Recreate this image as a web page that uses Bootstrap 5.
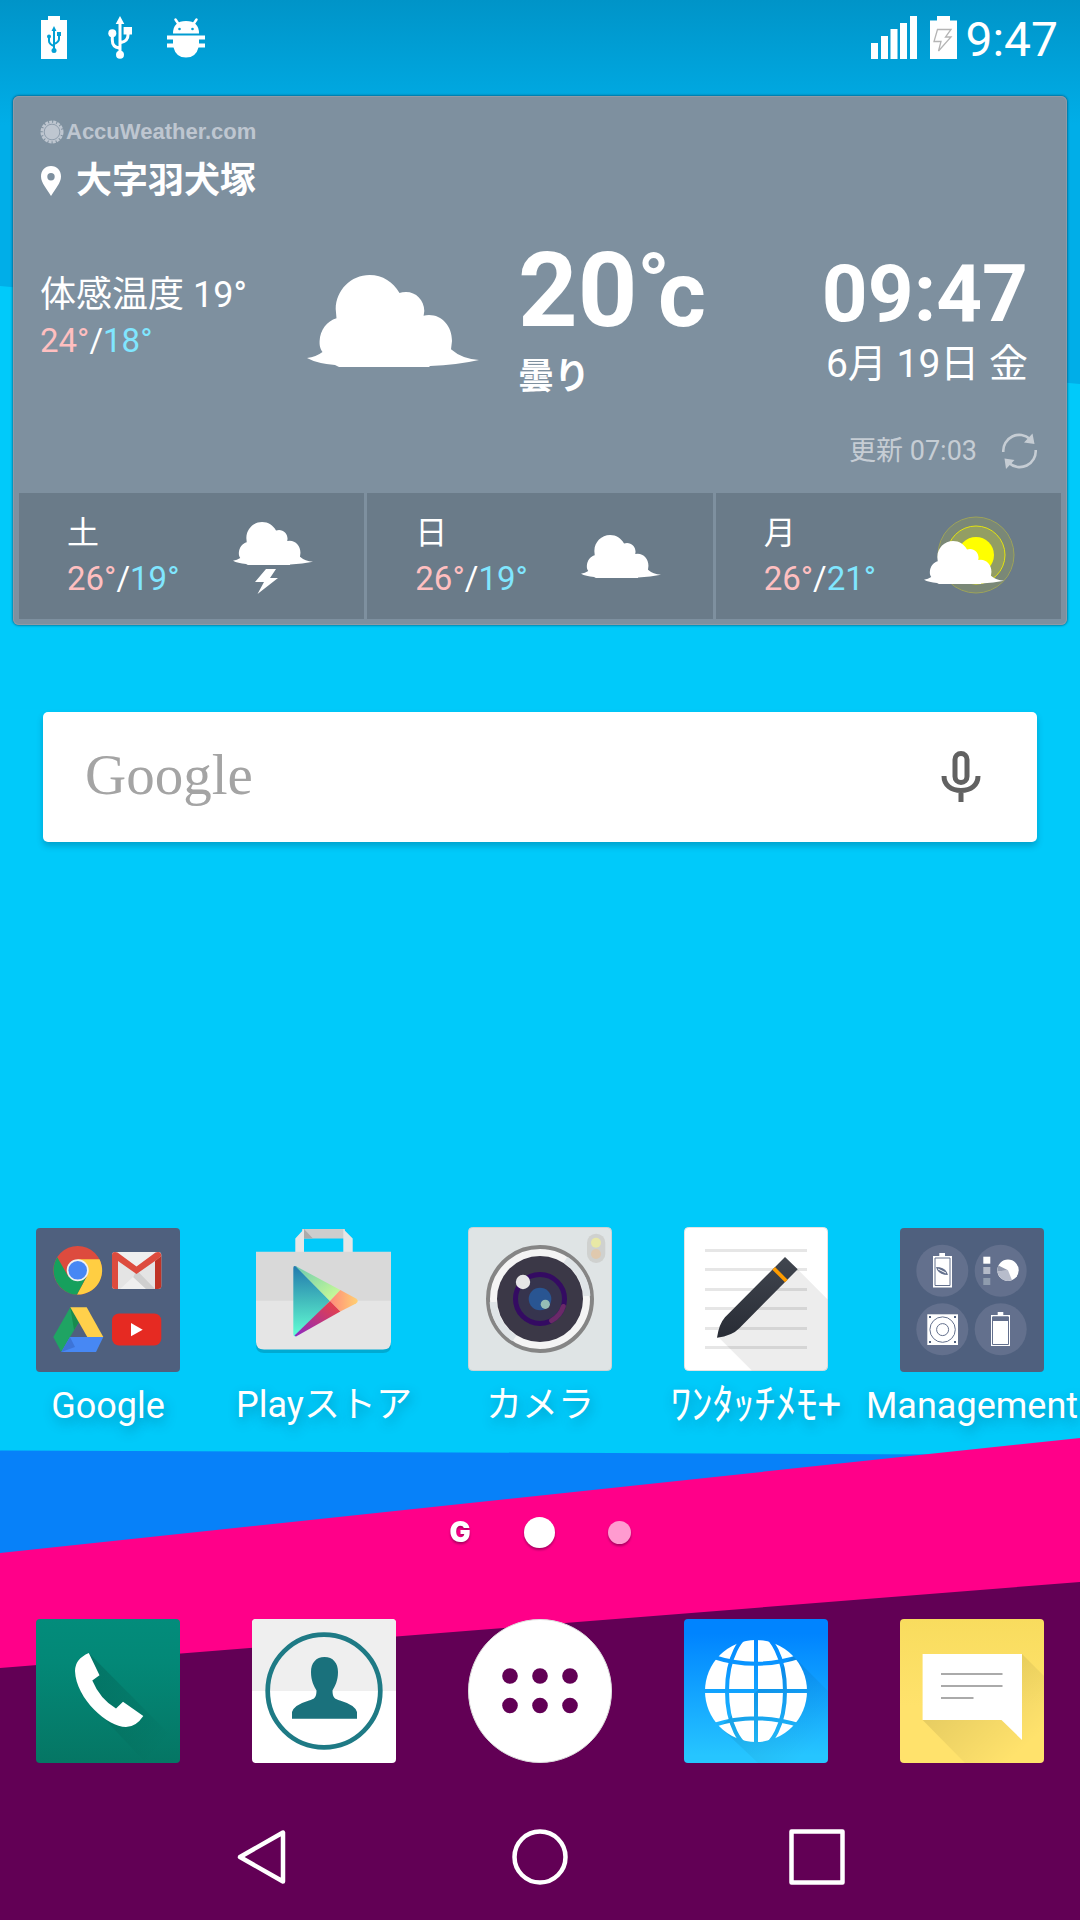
<!DOCTYPE html>
<html lang="ja">
<head>
<meta charset="utf-8">
<meta name="viewport" content="width=device-width, initial-scale=1">
<title>Home</title>
<link href="https://cdn.jsdelivr.net/npm/bootstrap@5.3.0/dist/css/bootstrap.min.css" rel="stylesheet">
<style>
  body { font-family: Roboto, "Noto Sans CJK JP", sans-serif; background: #00cafa; color: #fff; }
  svg { display: block; flex-shrink: 0; }
  .wallpaper { z-index: -1; }
  .bare { background: none; border: 0; padding: 0; color: inherit; }

  .status { height: 75px; padding: 0 22px 0 41px; }
  .status-icons { gap: 34px; }
  .clock { padding-top: 4px; font-size: 48px; line-height: 56px; }

  .weather { margin: 21px 13px 0; padding: 0 6px 6px; background: #7e909f; border-radius: 6px;
    box-shadow: inset 0 0 0 1px #8f9aa5, 0 0 2px 1px rgba(0,50,80,.45); }
  .now { padding: 24px 23px 24px 21px; }
  .brand { font: bold 22px/24px "Liberation Sans", Arial, sans-serif; color: #bec6d0; gap: 2px; }
  .place { margin-top: 17px; font-size: 36px; line-height: 40px; gap: 14px; }
  .current { margin-top: 35px; }
  .feels { width: 267px; font-size: 36px; line-height: 46px; }
  .range { font-size: 33px; line-height: 46px; }
  .hi { color: #ffbfc0; }
  .lo { color: #80e6ff; }
  .sky { margin-top: 6px; }
  .reading { margin-left: 39px; }
  .temp { font-size: 104px; line-height: 110px; }
  .deg { font-size: 84px; line-height: 80px; vertical-align: 14px; margin-right: -12px; }
  .unit { font-size: 92px; }
  .cond { padding-top: 4px; font-size: 36px; line-height: 46px; }
  .when { margin-right: 10px; padding-top: 12px; }
  .time-now { font-size: 80px; line-height: 80px; }
  .date-now { font-size: 39px; line-height: 60px; }
  .updated { margin-top: 33px; font-size: 27px; line-height: 36px; gap: 24px; color: #c6cdd4; }
  .days { gap: 3px; }
  .day { flex: 1 1 0; height: 126px; padding: 0 41px 0 48px; background: #6a7b89; }
  .day-name { font-size: 32px; line-height: 46px; }

  .search { margin: 87px 43px 0; height: 130px; padding: 0 48px 0 42px; background: #fff; border-radius: 5px;
    box-shadow: 0 4px 6px rgba(0,70,100,.3); }
  .search .form-control { font: 57px/70px "Liberation Serif", "Times New Roman", serif; color: #616161;
    background: none; border: 0; padding: 0 0 4px; box-shadow: none; }
  .search .form-control::placeholder { color: #a4a4a4; opacity: 1; }

  .tile { flex: 1 1 0; min-width: 0; color: #fff; text-decoration: none; }
  .folder { padding-top: 1px; }
  .tile-label { margin-top: 10px; font-size: 36px; line-height: 48px; white-space: nowrap;
    text-shadow: 2px 5px 12px rgba(0,60,90,.35); }
  .tile-label-narrow { font-size: 42px; }

  .pager { height: 40px; margin: 82px 0 67px; gap: 53px; filter: drop-shadow(0 2px 1px rgba(90,0,60,.5)); }
  .pager-home { font: 900 28px/30px Inter, Roboto, sans-serif; }
  .dot-now { width: 31px; height: 31px; background: #fff; }
  .dot-next { width: 23px; height: 23px; background: #ff9bd0; }
  .softkeys { width: 77%; height: 126px; margin: 31px auto 0; }
</style>
</head>
<body>
<svg width="0" height="0" class="position-absolute" aria-hidden="true">
  <defs>
    <symbol id="cloud" viewBox="0 0 172 92"><path fill="#fff" d="M0 83Q9 82 15.500 77C12.500 73 12.500 69 12.600 66C13 55 20 46 29.500 43.300L28.700 34C29 15 44 0 62.500 0C76 0 86 7 92.500 18Q95 17 99 17C109 17 117.300 25 117.300 36L116.600 40.700Q119 40 122 40C135 40 145 51 145 66L144 74.300Q155 84 172 85Q150 90 123 91L122 92H32L28 90Q10 88.500 0 83Z"/></symbol>
    <linearGradient id="gTop" x2="0" y2="1"><stop offset="0" stop-color="#0094c8"/><stop offset="1" stop-color="#00aee8"/></linearGradient>
    <linearGradient id="gPhone" x2="0" y2="1"><stop offset="0" stop-color="#038c7b"/><stop offset=".3" stop-color="#038877"/><stop offset="1" stop-color="#057664"/></linearGradient>
    <linearGradient id="gWeb" x2="0" y2="1"><stop offset=".1" stop-color="#0084ff"/><stop offset=".95" stop-color="#26c5ff"/></linearGradient>
    <linearGradient id="gMsg" x2="0" y2="1"><stop offset="0" stop-color="#f8dc5e"/><stop offset=".6" stop-color="#ffe26c"/></linearGradient>
    <linearGradient id="gShade" x2="1" y2="1"><stop offset="0" stop-opacity=".15"/><stop offset=".85" stop-opacity="0"/></linearGradient>
    <linearGradient id="gPlayA" x2="0" y2="1"><stop offset="0" stop-color="#2279ae"/><stop offset=".5" stop-color="#43bdbd"/><stop offset="1" stop-color="#62ffd5"/></linearGradient>
    <linearGradient id="gPlayB" x2="1" y2="1"><stop offset="0" stop-color="#6acab0"/><stop offset="1" stop-color="#d4ff94"/></linearGradient>
    <linearGradient id="gPlayC" x2="1"><stop offset="0" stop-color="#ff8a7a"/><stop offset="1" stop-color="#ffd072"/></linearGradient>
    <linearGradient id="gPlayD" y1="1" x2="1" y2="0"><stop offset="0" stop-color="#8a28c4"/><stop offset="1" stop-color="#f0443c"/></linearGradient>
    <linearGradient id="gPen" x2="0" y2="1"><stop offset="0" stop-color="#41464f"/><stop offset="1" stop-color="#282c35"/></linearGradient>
  </defs>
</svg>

<svg class="wallpaper position-absolute top-0 start-0 w-100 h-100" viewBox="0 0 1080 1920" preserveAspectRatio="none" aria-hidden="true">
  <rect width="1080" height="1920" fill="#00cafa"/>
  <path fill="#00aee8" d="M0 0H1080V384L0 286Z"/>
  <rect width="1080" height="125" fill="url(#gTop)"/>
  <path fill="#0781f9" d="M0 1450.500L1080 1455V1700H0Z"/>
  <path fill="#ff0089" d="M0 1553L1080 1438V1700H0Z"/>
  <path fill="#620055" d="M0 1668L1080 1582V1920H0Z"/>
</svg>

<div class="d-flex flex-column min-vh-100">
  <header class="status d-flex align-items-center justify-content-between">
    <div class="status-icons d-flex align-items-center">
      <svg width="26" height="43" viewBox="0 0 26 43" aria-label="Battery"><path fill="#fff" d="M7 0H19V4H26V43H0V4H7Z"/><g fill="none" stroke="#04a0d5" stroke-width="2"><path d="M13 14V34M8 21V25Q8 28 13 30M18 20V23Q18 26 13 28"/></g><g fill="#04a0d5"><path d="M13 10L15.500 15H10.500ZM16 16h4v4h-4z"/><circle cx="8" cy="20.500" r="2"/><circle cx="13" cy="34.500" r="2.500"/></g></svg>
      <svg width="32" height="43" viewBox="0 0 32 43" aria-label="USB"><g fill="none" stroke="#fff" stroke-width="3"><path d="M19 6V38M11.300 17V24Q11.300 31 18 32M27 16V19Q27 25 20 26.500"/></g><g fill="#fff"><path d="M19 0L23.300 8H14.700ZM22.600 11H31V18.500H22.600Z"/><circle cx="11.300" cy="17.300" r="4"/><circle cx="19" cy="38.700" r="4"/></g></svg>
      <svg width="38" height="43" viewBox="0 0 38 43" aria-label="USB debugging"><g fill="#fff"><path d="M6 17.500Q6 5 19 5T32 17.500ZM0 19.500H38V23.500H32V27.500H38V31.500H31.500Q29 41.500 19 41.500T6.500 31.500H0V27.500H6V23.500H0Z"/></g><path stroke="#fff" stroke-width="2.500" stroke-linecap="round" d="M8.500 3.500L11.500 8M29.500 3.500L26.500 8"/><g fill="#03a0d5"><circle cx="12.500" cy="13" r="1.300"/><circle cx="25.500" cy="13" r="1.300"/></g></svg>
    </div>
    <div class="d-flex align-items-center">
      <svg width="46" height="43" viewBox="0 0 46 43" aria-label="Signal"><path fill="#fff" d="M0 27h7v16H0zM10 20h7v23h-7zM19.500 13h7v30h-7zM29 7h7v36h-7zM39 0h7v43h-7z"/></svg>
      <svg class="ms-2 me-1" width="36" height="43" viewBox="0 0 36 43" aria-label="Charging"><path fill="#fff" d="M12 0H25V4.500H32V43H5V4.500H12Z"/><path fill="none" stroke="#b5b5b5" stroke-width="1.300" d="M12.500 13.500H26L20.500 21H26L13.500 35L16 25.500H9Z"/></svg>
      <div class="clock">9:47</div>
    </div>
  </header>

  <main class="d-flex flex-column flex-grow-1">
    <section class="weather">
      <div class="now">
        <div class="brand d-flex align-items-center">
          <svg width="24" height="24" viewBox="0 0 24 24" aria-hidden="true"><circle cx="12" cy="12" r="10" fill="none" stroke="#bec6d0" stroke-width="3" stroke-dasharray="3 1"/><circle cx="12" cy="12" r="9.300" fill="#bec6d0"/><circle cx="12" cy="12" r="7.800" fill="none" stroke="#8f9dac" stroke-width="1"/></svg>
          <span>AccuWeather.com</span>
        </div>
        <div class="place d-flex align-items-center fw-bold">
          <svg width="22" height="30" viewBox="0 0 22 30" aria-hidden="true"><path fill="#fff" fill-rule="evenodd" d="M11 0C17 0 21 4.500 21 10.500C21 17 15 23 11 30C7 23 1 17 1 10.500C1 4.500 5 0 11 0ZM11 7a3.700 3.700 0 1 0 0 7.400a3.700 3.700 0 1 0 0-7.400Z"/></svg>
          <span>大字羽犬塚</span>
        </div>
        <div class="current d-flex align-items-center">
          <div class="feels">
            <div>体感温度 19°</div>
            <div class="range"><span class="hi">24°</span>/<span class="lo">18°</span></div>
          </div>
          <svg class="sky" width="172" height="92" aria-label="曇り"><use href="#cloud"/></svg>
          <div class="reading fw-bold">
            <div class="temp">20<span class="deg">°</span><span class="unit">c</span></div>
            <div class="cond">曇り</div>
          </div>
          <div class="when ms-auto text-end">
            <div class="time-now fw-bold">09:47</div>
            <div class="date-now">6月 19日 金</div>
          </div>
        </div>
        <div class="updated d-flex align-items-center justify-content-end">
          <span>更新 07:03</span>
          <button class="bare" type="button" aria-label="更新">
            <svg width="37" height="36" viewBox="0 0 37 36"><g fill="none" stroke="#c6cdd4" stroke-width="2.600"><path d="M2.300 19A16 16 0 0 1 29 6M34.700 17A16 16 0 0 1 8 30"/></g><path fill="#c6cdd4" d="M31.500 0.500L33.500 11L23 9.500ZM3.500 25.500L13.500 27L5 36Z"/></svg>
          </button>
        </div>
      </div>
      <div class="days d-flex">
        <div class="day d-flex align-items-center justify-content-between">
          <div><div class="day-name">土</div><div class="range"><span class="hi">26°</span>/<span class="lo">19°</span></div></div>
          <svg width="100" height="84" viewBox="0 0 100 84" aria-hidden="true"><use href="#cloud" x="10" y="8" width="80" height="43"/><path fill="#fff" d="M43 55H53L47 64H55L34.500 80L41 68H32Z"/></svg>
        </div>
        <div class="day d-flex align-items-center justify-content-between">
          <div><div class="day-name">日</div><div class="range"><span class="hi">26°</span>/<span class="lo">19°</span></div></div>
          <svg width="100" height="84" viewBox="0 0 100 84" aria-hidden="true"><use href="#cloud" x="9" y="21" width="80" height="43"/></svg>
        </div>
        <div class="day d-flex align-items-center justify-content-between">
          <div><div class="day-name">月</div><div class="range"><span class="hi">26°</span>/<span class="lo">21°</span></div></div>
          <svg width="100" height="84" viewBox="0 0 100 84" aria-hidden="true"><circle cx="56" cy="41" r="38" fill="#7a8877" stroke="#9da35a"/><circle cx="56" cy="41" r="29" fill="#939e63" stroke="#e4e40e"/><circle cx="56" cy="41" r="18" fill="#ff0"/><use href="#cloud" x="4" y="27" width="80" height="43"/></svg>
        </div>
      </div>
    </section>

    <form class="search d-flex align-items-center" role="search">
      <input class="form-control" type="search" placeholder="Google" aria-label="Google">
      <button class="bare" type="button" aria-label="音声検索">
        <svg width="56" height="54" viewBox="0 0 56 54"><rect x="22" y="3.500" width="12" height="29" rx="6" fill="none" stroke="#616161" stroke-width="5"/><path fill="none" stroke="#616161" stroke-width="5" d="M11 26C11 35 18 40.500 28 40.500S45 35 45 26M28 40V52"/></svg>
      </button>
    </form>

    <nav class="d-flex mt-auto" aria-label="アプリ">
      <a class="tile folder d-flex flex-column align-items-center" href="#google">
        <svg width="144" height="144" viewBox="0 0 144 144" aria-hidden="true">
          <rect width="144" height="144" rx="4" fill="#4f607e"/>
          <circle cx="41.700" cy="42.300" r="24.300" fill="#dd4b3e"/>
          <path fill="#ffce42" d="M41.700 31.300H63.500A24.300 24.300 0 0 1 41 66.600L51.200 47.800Z"/>
          <path fill="#16a05d" d="M41 66.600A24.300 24.300 0 0 1 21.300 29.300L32 48L41.700 53.300L50.500 48.700Z"/>
          <circle cx="41.700" cy="42.300" r="11" fill="#f1f1f1"/><circle cx="41.700" cy="42.300" r="9.300" fill="#4687f4"/>
          <rect x="76" y="24" width="49.300" height="37" rx="3" fill="#e4e4e4"/>
          <path fill="#cfcfcf" d="M100.500 42L119 61H92Z"/><path fill="#efefef" d="M97 49L110 61H84ZM80 24H121L100.500 39Z"/>
          <path fill="#dd4b3e" d="M76 27Q76 24 79 24L81.500 24.500L100.500 38.500L119.500 24.500L122 24Q125.300 24 125.300 28L119 33L100.500 46L82 33V61H79Q76 61 76 58Z"/><path fill="#bf3326" d="M119 33L125.300 28V58Q125.300 61 122 61H119Z"/>
          <path fill="#1fa463" d="M34.300 79.300L42.700 94.300L25.300 124L17.300 109Z"/><path fill="#188b4d" d="M34.300 79.300L42.700 94.300L38 102Z"/><path fill="#ffd04b" d="M34.300 79.300H50.700L67.300 109H51.300Z"/><path fill="#4788f4" d="M34 109H67.300L60 124H25.300Z"/><path fill="#3d74d8" d="M34 109L25.300 124L39 119Z"/>
          <rect x="76" y="85.500" width="49.300" height="32" rx="7" fill="#e62a22"/><path fill="#fff" d="M95 95L106.700 101.800L95 108.300Z"/>
        </svg>
        <span class="tile-label">Google</span>
      </a>
      <a class="tile d-flex flex-column align-items-center" href="#play">
        <svg width="144" height="144" viewBox="0 0 144 144" aria-hidden="true">
          <path fill="#00000028" d="M4 116H139V118Q139 126 131 126H12Q4 126 4 118Z"/>
          <path fill="#cdcdcd" d="M50 2H93V11.500H50Z"/><path fill="#e6e6e6" d="M43.300 25V11.500L52 2V25ZM91.300 25V2L100.700 11.500V25Z"/><path fill="#ababab" d="M52 2L61 11.500H52Z"/>
          <path fill="#d9d9d9" d="M4 24.700H139V74H4Z"/><path fill="#e5e5e5" d="M4 73.700H139V114.500Q139 122.500 131 122.500H12Q4 122.500 4 114.500Z"/>
          <path fill="url(#gPlayA)" d="M41.300 41Q41.300 38 44 39.300L78 74L44 109.500Q41.300 110 41.300 107Z"/>
          <path fill="url(#gPlayB)" d="M43 38.700L88.300 63L78 74Z"/><path fill="url(#gPlayC)" d="M88.300 63L104 71.500Q107.500 74 104 76.500L88.300 84.500L78 74Z"/><path fill="url(#gPlayD)" d="M78 74L88.300 84.500L44 109.500L42.500 108.500Z"/>
        </svg>
        <span class="tile-label">Playストア</span>
      </a>
      <a class="tile d-flex flex-column align-items-center" href="#camera">
        <svg width="144" height="144" viewBox="0 0 144 144" aria-hidden="true">
          <rect x=".5" y=".5" width="143" height="143" rx="4" fill="#dfe4e5" stroke="#cdd2d3"/>
          <circle cx="72" cy="72" r="52" fill="#f4f4f4" stroke="#858585" stroke-width="4"/>
          <path fill="none" stroke="#dfe4e7" stroke-width="7" d="M97.600 32.600A47 47 0 0 1 118.900 69M25.100 75A47 47 0 0 0 46.400 111.400"/>
          <circle cx="72" cy="72" r="43" fill="#3b3847"/><circle cx="72" cy="72" r="24.500" fill="#36344e" stroke="#340b62" stroke-width="5"/>
          <path fill="none" stroke="#6a2968" stroke-width="5" stroke-linecap="round" d="M95.300 79.500A24.500 24.500 0 0 1 83.500 93.600"/>
          <circle cx="72" cy="72" r="11.300" fill="#295592"/><circle cx="77.300" cy="77.300" r="4.600" fill="#95bdb5"/><circle cx="55" cy="55" r="7.200" fill="#e6e6e6"/>
          <rect x="119" y="6.700" width="18.300" height="29.300" rx="9" fill="#cfd1cf"/><circle cx="128" cy="15.700" r="5" fill="#e8e8a6"/><circle cx="128" cy="27" r="5" fill="#e0c9ae"/>
        </svg>
        <span class="tile-label">カメラ</span>
      </a>
      <a class="tile d-flex flex-column align-items-center" href="#memo">
        <svg width="144" height="144" viewBox="0 0 144 144" aria-hidden="true">
          <rect x=".5" y=".5" width="143" height="143" rx="4" fill="#fff" stroke="#e4e4e4"/>
          <path stroke="#e6e6e6" stroke-width="3" d="M21 23.500H123M21 42.500H123M21 62.500H123M21 81.500H123M21 101.500H123M21 120.500H123"/>
          <path fill="#000" fill-opacity=".07" d="M113.700 42.300L143.500 72.300V140Q143.500 143.500 140 143.500H67.700L35 110.700L80 76Z"/>
          <path fill="url(#gPen)" d="M101 30L113.700 42.300L55.300 101.300Q48 109 33 110.700Q35 97 41 90.300Z"/><path fill="#ff9c00" d="M91 40L88.300 42.700L101 55.300L103.700 52.700Z"/>
        </svg>
        <span class="tile-label tile-label-narrow">ﾜﾝﾀｯﾁﾒﾓ+</span>
      </a>
      <a class="tile folder d-flex flex-column align-items-center" href="#management">
        <svg width="144" height="144" viewBox="0 0 144 144" aria-hidden="true">
          <rect width="144" height="144" rx="4" fill="#4f607e"/>
          <g fill="#63708d"><circle cx="42.300" cy="42.700" r="26"/><circle cx="100.700" cy="42.700" r="26"/><circle cx="42.300" cy="101.300" r="26"/><circle cx="100.700" cy="101.300" r="26"/></g>
          <path fill="#fff" d="M39.300 25H45V28H52V59.500H33V28H39.300Z"/><path fill="none" stroke="#63708d" d="M35 30H50V57.500H35Z"/><path fill="#63708d" d="M36 39Q46 39 48 47Q38 47 36 39Z"/><path stroke="#fff" d="M38 41L46 45"/>
          <path fill="#fff" d="M83.300 28.700h7v7h-7z"/><path fill="#b4bac8" d="M83.300 39h7v7h-7z"/><path fill="#8f9cae" d="M83.300 50h7v7h-7z"/>
          <circle cx="108" cy="42.300" r="10.700" fill="#fff"/><path fill="#b7bccb" d="M108 42.300L112 52.200A10.700 10.700 0 0 1 97.400 43.500Z"/><path fill="#9199ad" d="M108 42.300L97.300 43.500A10.700 10.700 0 0 1 98.500 37.500Z"/>
          <path fill="#fff" d="M27.300 86.300H58V117H27.300Z"/><g fill="none" stroke="#63708d"><circle cx="42.600" cy="101.600" r="12.700"/><circle cx="42.600" cy="101.600" r="6"/></g><path fill="#4f607e" d="M29 88h2v2h-2zM54 88h2v2h-2zM29 113h2v2h-2zM54 113h2v2h-2z"/>
          <path fill="#fff" d="M97.700 84H103.300V87H110V118H91V87H97.700Z"/><path fill="#63708d" d="M92.500 88.500H108.500V93H92.500Z"/><path fill="none" stroke="#63708d" d="M92.500 89H108.500V116.500H92.500Z"/>
        </svg>
        <span class="tile-label">Management</span>
      </a>
    </nav>

    <div class="pager d-flex align-items-center justify-content-center">
      <span class="pager-home">G</span><span class="dot-now rounded-circle"></span><span class="dot-next rounded-circle"></span>
    </div>

    <nav class="d-flex" aria-label="ドック">
      <a class="tile d-flex justify-content-center" href="#phone" aria-label="電話">
        <svg width="144" height="144" viewBox="0 0 144 144"><rect width="144" height="144" rx="4" fill="url(#gPhone)"/><path fill="url(#gShade)" d="M52.800 34L140 122V144H110L45 75Z"/><path fill="#fff" d="M52.800 34L63.500 56.300L56.300 61.500Q64 80 80 89.500L87 82.700L107.300 97Q100 108 90 108C72 108 40 80 39 52Q39 40 52.800 34Z"/></svg>
      </a>
      <a class="tile d-flex justify-content-center" href="#contacts" aria-label="連絡先">
        <svg width="144" height="144" viewBox="0 0 144 144"><rect width="144" height="144" rx="4" fill="#fff"/><path fill="#efefef" d="M4 0H140Q144 0 144 4V72H0V4Q0 0 4 0Z"/><circle cx="72" cy="72" r="56.300" fill="none" stroke="#1e7a85" stroke-width="4.700"/><path fill="#1a717c" d="M72.500 38C81 38 86 44 86 53C86 62 83 67 80.500 71.500C80.500 79 83 80 88 81.500Q103 86 105 93V99.700H40V93Q42 86 57 81.500C62 80 64.500 79 64.500 71.500C62 67 59 62 59 53C59 44 64 38 72.500 38Z"/></svg>
      </a>
      <a class="tile d-flex justify-content-center" href="#apps" aria-label="アプリ一覧">
        <svg width="144" height="144" viewBox="0 0 144 144"><circle cx="72" cy="72" r="71.500" fill="#fff" stroke="#ddd"/><g fill="#620055"><circle cx="42" cy="57" r="7.800"/><circle cx="72" cy="57" r="7.800"/><circle cx="102" cy="57" r="7.800"/><circle cx="42" cy="86.500" r="7.800"/><circle cx="72" cy="86.500" r="7.800"/><circle cx="102" cy="86.500" r="7.800"/></g></svg>
      </a>
      <a class="tile d-flex justify-content-center" href="#browser" aria-label="ブラウザ">
        <svg width="144" height="144" viewBox="0 0 144 144"><mask id="globe"><rect width="144" height="144"/><circle cx="72" cy="72" r="51" fill="#fff"/><g fill="none" stroke="#000" stroke-width="4"><path d="M72 20V124M20 72H124M28 37.500Q72 52 116 37.500M28 106.500Q72 92 116 106.500"/><ellipse cx="72" cy="72" rx="29" ry="58"/></g></mask><rect width="144" height="144" rx="4" fill="url(#gWeb)"/><path fill="url(#gShade)" d="M109 37L144 72V140Q144 144 140 144H74L36 108Z"/><rect width="144" height="144" fill="#fff" mask="url(#globe)"/></svg>
      </a>
      <a class="tile d-flex justify-content-center" href="#messages" aria-label="メッセージ">
        <svg width="144" height="144" viewBox="0 0 144 144"><rect width="144" height="144" rx="4" fill="url(#gMsg)"/><path fill="url(#gShade)" d="M122 35L144 57V140Q144 144 140 144H65L22.600 101Z"/><path fill="#fff" d="M22.600 35H122V121L101.500 101H22.600Z"/><path stroke="#aaa" stroke-width="2" d="M41 55H102.500M41 67H102.500M41 79H73.500"/></svg>
      </a>
    </nav>
  </main>

  <footer class="softkeys d-flex align-items-center">
    <button class="bare flex-fill d-flex justify-content-center" type="button" aria-label="戻る"><svg width="56" height="56" viewBox="0 0 56 56"><path fill="none" stroke="#fff" stroke-width="4.500" stroke-linejoin="round" d="M5 28L48 3.500V52.500Z"/></svg></button>
    <button class="bare flex-fill d-flex justify-content-center" type="button" aria-label="ホーム"><svg width="56" height="56" viewBox="0 0 56 56"><circle cx="28" cy="28" r="25.500" fill="none" stroke="#fff" stroke-width="4.500"/></svg></button>
    <button class="bare flex-fill d-flex justify-content-center" type="button" aria-label="最近使ったアプリ"><svg width="56" height="56" viewBox="0 0 56 56"><rect x="2.500" y="2.500" width="51" height="51" fill="none" stroke="#fff" stroke-width="4.500" stroke-linejoin="round"/></svg></button>
  </footer>
</div>
<script src="https://cdn.jsdelivr.net/npm/bootstrap@5.3.0/dist/js/bootstrap.bundle.min.js"></script>
</body>
</html>
